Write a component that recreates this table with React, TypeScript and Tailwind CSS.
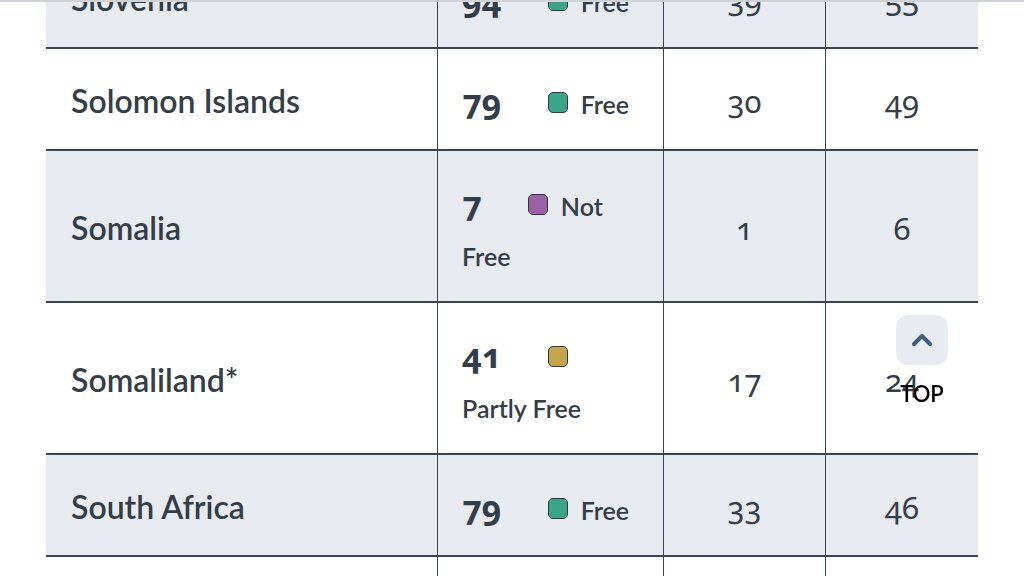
import { ChevronUp } from "lucide-react";

interface Row {
    country: string;
    score: number;
    status: "Free" | "Partly Free" | "Not Free";
    pr: number;
    cl: number;
}

const rows: Row[] = [
    { country: "Slovenia", score: 94, status: "Free", pr: 39, cl: 55 },
    { country: "Solomon Islands", score: 79, status: "Free", pr: 30, cl: 49 },
    { country: "Somalia", score: 7, status: "Not Free", pr: 1, cl: 6 },
    { country: "Somaliland*", score: 41, status: "Partly Free", pr: 17, cl: 24 },
    { country: "South Africa", score: 79, status: "Free", pr: 33, cl: 46 },
    { country: "South Korea", score: 83, status: "Free", pr: 33, cl: 50 },
];

const badgeColor: Record<Row["status"], string> = {
    Free: "bg-[#3aa587]",
    "Partly Free": "bg-[#c4a54a]",
    "Not Free": "bg-[#9a62a5]",
};

function ScoreCell({ row }: { row: Row }) {
    return (
        <div className="border-l-[1.5px] border-[#3b4450] pl-6 pr-[30px] pt-[30px] pb-[20px] text-[25px] leading-[50px] font-semibold">
            <span className="text-[34px] leading-none font-bold font-['Noto_Sans','Lato',sans-serif] oldstyle-nums mr-[46px]">
                {row.score}
            </span>
            <span
                className={`inline-block w-5 h-[21px] leading-none rounded-[5px] border-[1.5px] border-[#2f3640] mr-[13px] align-[1px] ${badgeColor[row.status]}`}
            />
            {row.status}
        </div>
    );
}

export default function App() {
    return (
        <div className="relative h-screen overflow-hidden bg-white text-[#343e49] font-['Lato','Open_Sans',sans-serif]">
            {/* top edge line */}
            <div className="fixed top-0 left-0 right-0 h-[2px] bg-[#cfd2d6] z-10" />

            <div className="-mt-[53px] ml-[46px] w-[932px]">
                {rows.map((row, i) => (
                    <div
                        key={row.country}
                        className={`grid grid-cols-[391px_226px_162px_153px] border-b-2 border-[#3b4450] ${
                            i % 2 === 0 ? "bg-[#e8ebf0]" : "bg-white"
                        }`}
                    >
                        <div className="flex items-center pl-[25px] pt-1 text-[32px] font-semibold">
                            {row.country}
                        </div>
                        <ScoreCell row={row} />
                        <div className="border-l-[1.5px] border-[#3b4450] flex items-center justify-center text-[31px] font-['Noto_Sans','Lato',sans-serif] oldstyle-nums pt-1">
                            {row.pr}
                        </div>
                        <div className="border-l-[1.5px] border-[#3b4450] flex items-center justify-center text-[31px] font-['Noto_Sans','Lato',sans-serif] oldstyle-nums pt-1">
                            {row.cl}
                        </div>
                    </div>
                ))}
            </div>

            {/* back to top */}
            <div className="fixed left-[896px] top-[315px] flex flex-col items-center z-20">
                <button
                    type="button"
                    className="w-[52px] h-[50px] rounded-[12px] bg-[#e8ecf1] flex items-center justify-center"
                >
                    <ChevronUp className="w-8 h-8 text-[#3e5d84]" strokeWidth={3} />
                </button>
                <span className="mt-[16px] text-[22px] leading-[26px] font-semibold text-black">TOP</span>
            </div>
        </div>
    );
}
